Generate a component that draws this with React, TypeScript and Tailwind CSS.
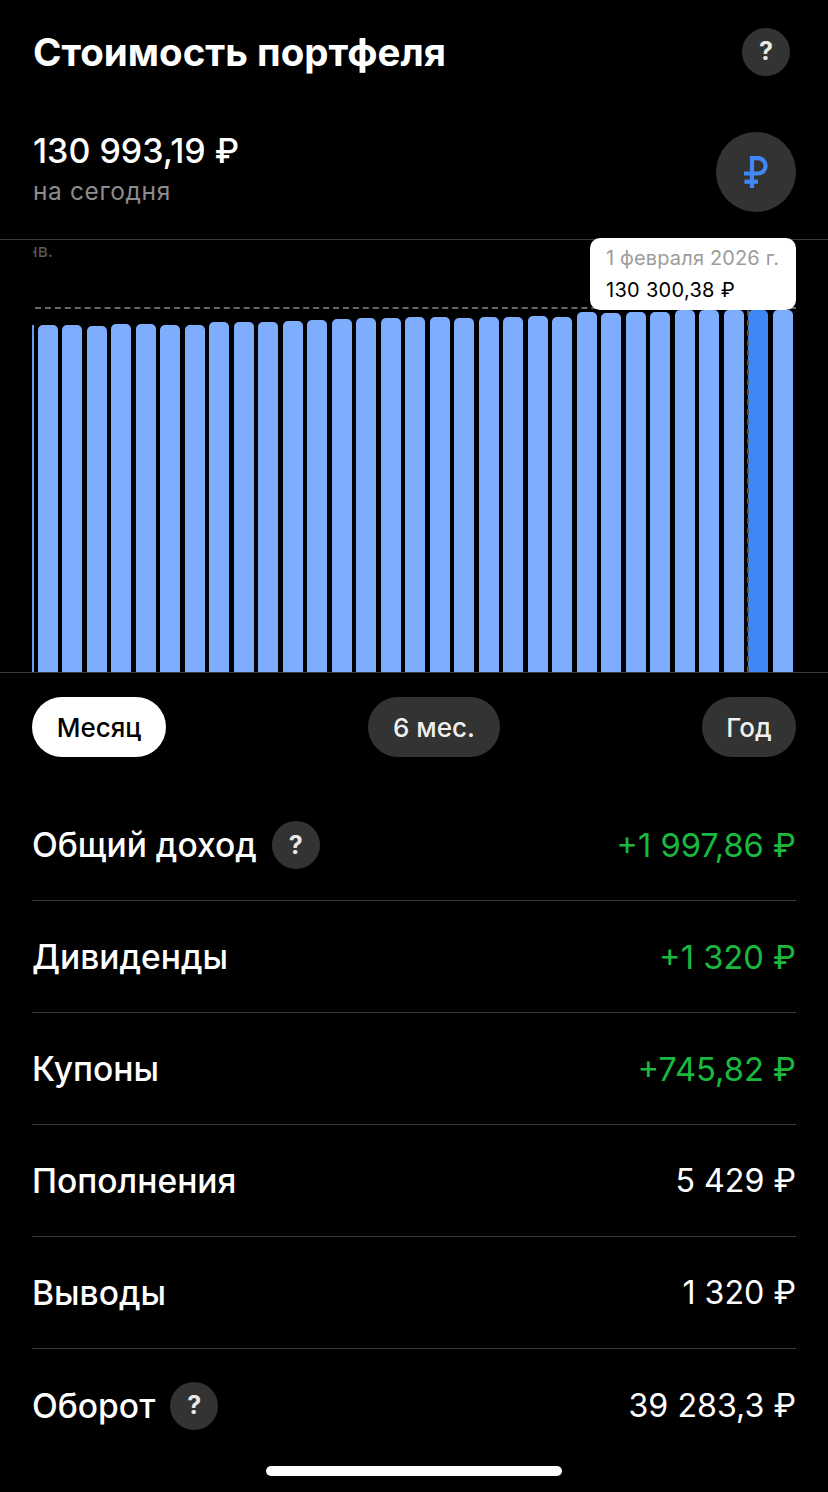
const barTops = [325, 325, 326, 324, 324, 325, 325, 322, 322, 322, 321, 320, 319, 318, 318, 317, 317, 318, 317, 317, 316, 317, 312, 313, 312, 312, 310, 310, 310, 310, 310];

const rows = [
  { label: 'Общий доход', value: '+1 997,86 ₽', green: true, help: true },
  { label: 'Дивиденды', value: '+1 320 ₽', green: true },
  { label: 'Купоны', value: '+745,82 ₽', green: true },
  { label: 'Пополнения', value: '5 429 ₽' },
  { label: 'Выводы', value: '1 320 ₽' },
  { label: 'Оборот', value: '39 283,3 ₽', help: true },
];

const HelpButton = () => (
  <div className="flex h-12 w-12 items-center justify-center rounded-full bg-[#333333] text-[25px] font-bold text-[#e8e8e8]">?</div>
);

const RubleIcon = () => (
  <svg width="24" height="32" viewBox="0 0 24 32" fill="none" stroke="#4088f5" strokeWidth="4.2">
    <path d="M8 32V2.2h6a7.65 7.65 0 0 1 0 15.3H0" />
    <path d="M0.5 25.7H14" />
  </svg>
);

const Chart = () => (
  <div className="relative h-[434px] border-y border-[#3a3a3c]">
    <div className="absolute left-[33px] top-0 w-[22px] overflow-hidden whitespace-nowrap text-[18px] leading-[22px] text-[#5c5c5c]">
      <span className="ml-[-6px] block">нв.</span>
    </div>
    <div className="absolute left-[35px] right-[32px] top-[67px] border-t-2 border-dashed border-[#666666]" />
    <div className="flex h-full items-end pl-[32px]">
      <div className="mr-[3.5px] h-[347px] w-[2px] bg-[#6d9ae8]" />
      {barTops.map((top, i) => (
        <div
          key={i}
          className={`mr-[4.5px] w-[20px] shrink-0 rounded-t-[5px] ${i === 29 ? 'bg-[#3f87f5]' : 'bg-[#7dadfc]'}`}
          style={{ height: 672 - top }}
        />
      ))}
    </div>
    <div className="absolute left-[747px] top-[70px] h-[362px] border-l-2 border-dashed border-[#555555]" />
    <div className="absolute left-[590px] top-[-2px] h-[72px] w-[206px] rounded-[10px] bg-white px-4 pt-[6px]">
      <div className="whitespace-nowrap text-[20px] leading-[28px] tracking-[0.15px] text-[#9c9c9c]">1 февраля 2026 г.</div>
      <div className="mt-[4px] whitespace-nowrap text-[20px] leading-[28px] tracking-[0.3px] text-black">130 300,38 ₽</div>
    </div>
  </div>
);

export default function App() {
  return (
    <div className="flex h-[1492px] w-[828px] flex-col overflow-hidden bg-black font-['Inter',sans-serif] text-white">
      <div className="flex h-[104px] items-center justify-between pl-[33px] pr-[38px]">
        <h1 className="text-[38.5px] font-bold leading-[44px]">Стоимость портфеля</h1>
        <HelpButton />
      </div>
      <div className="flex h-[135px] items-start justify-between pl-[33px] pr-[32px] pt-[26px]">
        <div>
          <div className="text-[34px] font-medium leading-[42px]">130 993,19 ₽</div>
          <div className="mt-[4px] text-[24.5px] leading-[30px] tracking-[0.6px] text-[#8c8c8c]">на сегодня</div>
        </div>
        <div className="mt-[2px] flex h-20 w-20 items-center justify-center rounded-full bg-[#333333]">
          <RubleIcon />
        </div>
      </div>
      <Chart />
      <div className="flex items-center justify-between px-[32px] pt-[24px]">
        <div className="flex h-[60px] w-[134px] items-center justify-center rounded-full bg-white text-[26px] font-medium text-black">Месяц</div>
        <div className="flex h-[60px] w-[132px] items-center justify-center rounded-full bg-[#333333] text-[26px] font-medium text-[#f0f0f0]">6 мес.</div>
        <div className="flex h-[60px] w-[94px] items-center justify-center rounded-full bg-[#333333] text-[26px] font-medium text-[#f0f0f0]">Год</div>
      </div>
      <div className="mt-[32px] px-[32px]">
        {rows.map((row, i) => (
          <div key={row.label} className={`flex h-[112px] items-center justify-between pt-[2px] ${i < rows.length - 1 ? 'border-b border-[#3a3a3c]' : ''}`}>
            <div className="flex items-center gap-[15px]">
              <span className="text-[33.6px] font-medium">{row.label}</span>
              {row.help && <HelpButton />}
            </div>
            <span className={row.green ? 'text-[32.7px] text-[#1ab83f]' : 'text-[32.2px] text-white'}>{row.value}</span>
          </div>
        ))}
      </div>
      <div className="mx-auto mt-[5px] h-[10px] w-[296px] rounded-full bg-white" />
    </div>
  );
}
